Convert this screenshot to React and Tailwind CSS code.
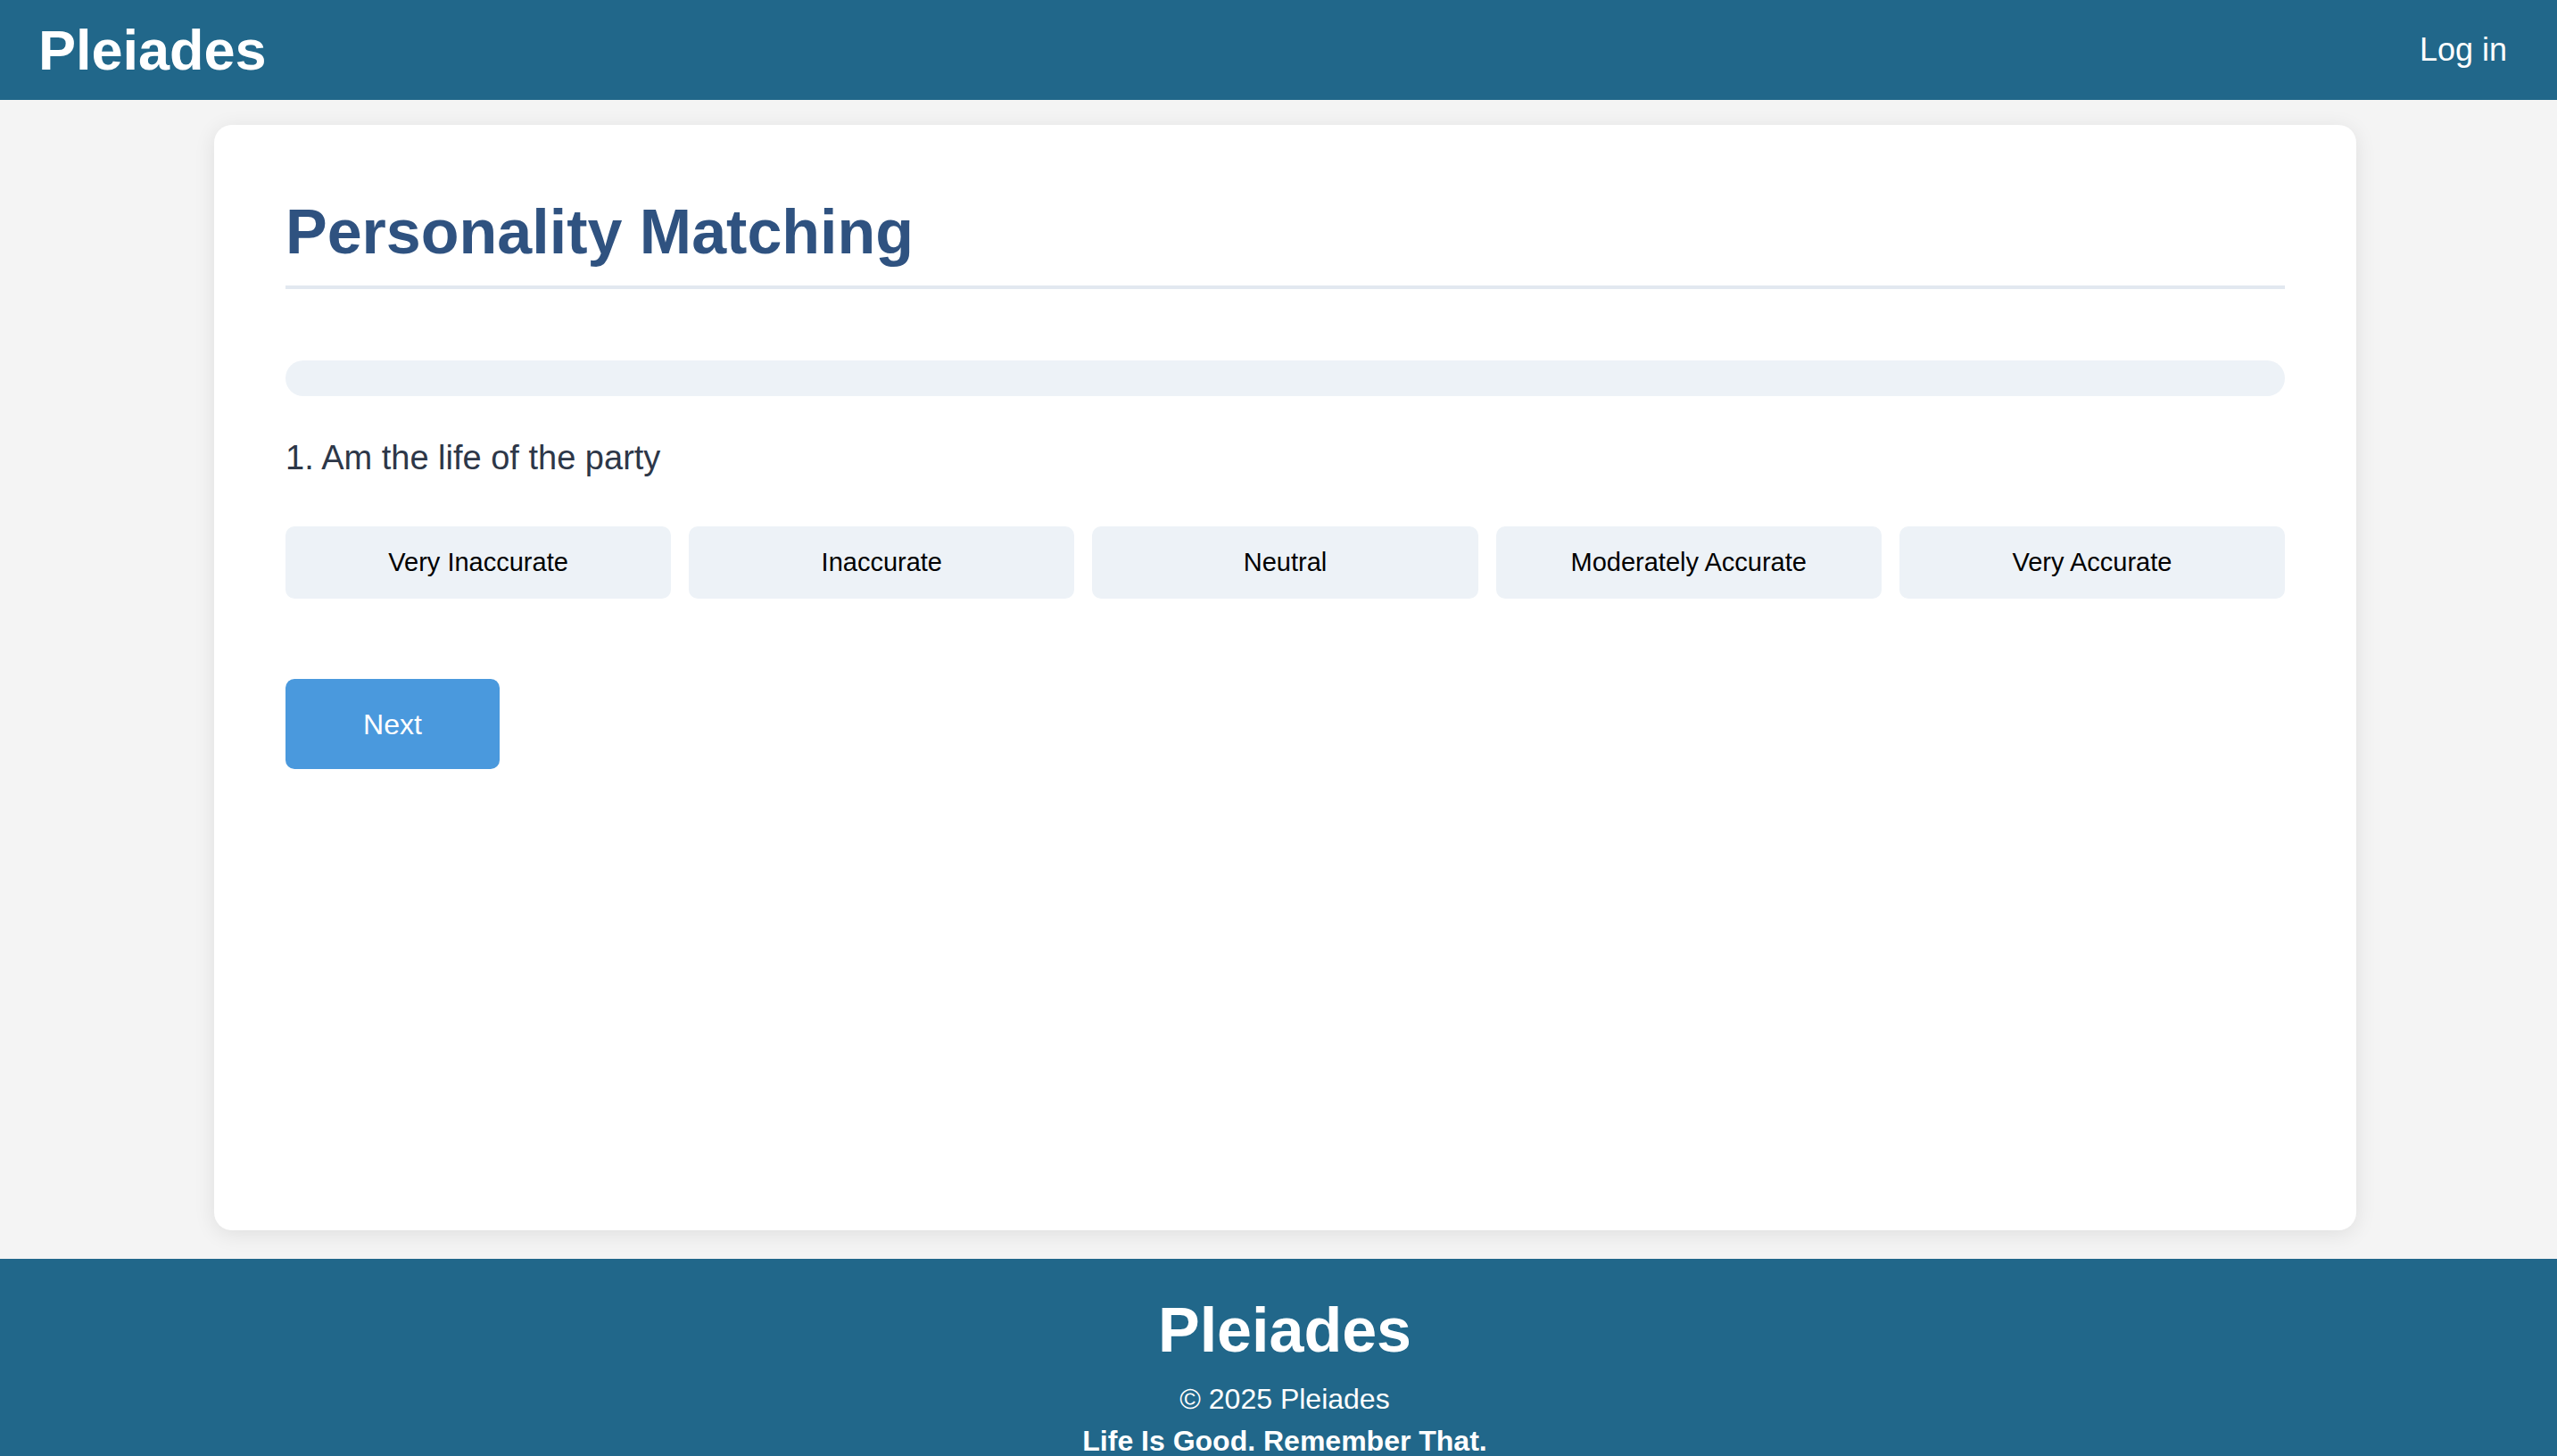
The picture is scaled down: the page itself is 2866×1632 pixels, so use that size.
import React from "react";

const options = [
  "Very Inaccurate",
  "Inaccurate",
  "Neutral",
  "Moderately Accurate",
  "Very Accurate",
];

export default function App() {
  return (
    <div className="min-h-screen bg-[#f4f4f4] font-['Liberation_Sans',Arial,sans-serif]">
      <header className="h-[112px] bg-[#21678a] flex items-center justify-between pl-[43px] pr-[56px]">
        <div className="text-white font-bold text-[63px] leading-none">Pleiades</div>
        <a className="text-white text-[36px] leading-none cursor-pointer">Log in</a>
      </header>

      <main className="pt-[28px] pb-[32px] pl-[240px] pr-[225px]">
        <div className="bg-white rounded-[20px] shadow-[0_4px_24px_rgba(0,0,0,0.09)] h-[1239px] p-[80px]">
          <h1 className="text-[70px] font-bold text-[#2f5280] leading-[80px] pb-[20px] border-b-[4px] border-[#e2e8f0]">
            Personality Matching
          </h1>
          <div className="mt-[80px] h-[40px] rounded-full bg-[#edf2f7]" />
          <p className="mt-[47px] text-[38px] leading-[44px] text-[#2d3748]">
            1. Am the life of the party
          </p>
          <div className="mt-[55px] grid grid-cols-5 gap-[20px]">
            {options.map((o) => (
              <button
                key={o}
                className="h-[81px] rounded-[10px] bg-[#edf2f7] text-black text-[29px] flex items-center justify-center"
              >
                {o}
              </button>
            ))}
          </div>
          <button className="mt-[90px] w-[240px] h-[101px] rounded-[10px] bg-[#4a99dd] text-white text-[32px] flex items-center justify-center">
            Next
          </button>
        </div>
      </main>

      <footer className="bg-[#21678a] text-white text-center pl-[14px] pt-[40px] pb-[20px]">
        <div className="text-[70px] font-bold leading-[80px]">Pleiades</div>
        <div className="mt-[19px] text-[32px] leading-[37px]">© 2025 Pleiades</div>
        <div className="mt-[10px] text-[32px] font-bold leading-[37px]">Life Is Good. Remember That.</div>
      </footer>
    </div>
  );
}
